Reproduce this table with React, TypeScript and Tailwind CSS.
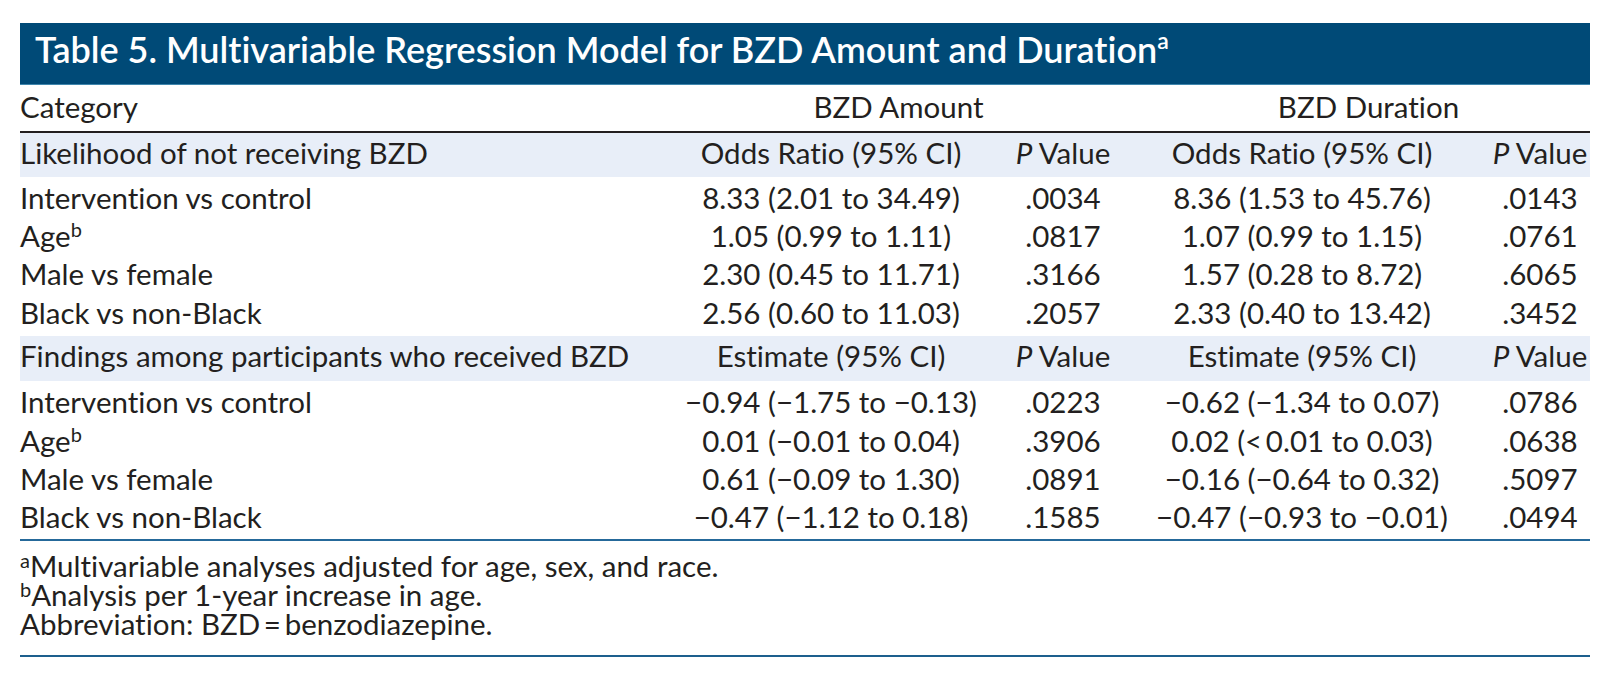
import React from "react";

const FONT = { fontFamily: "Lato, 'Open Sans', sans-serif" };

type Row = [React.ReactNode, string, string, string, string];

const SupB = () => <sup className="text-[20px] -top-[0.5em]">b</sup>;

const rows1: Row[] = [
  ["Intervention vs control", "8.33 (2.01 to 34.49)", ".0034", "8.36 (1.53 to 45.76)", ".0143"],
  [<>Age<SupB /></>, "1.05 (0.99 to 1.11)", ".0817", "1.07 (0.99 to 1.15)", ".0761"],
  ["Male vs female", "2.30 (0.45 to 11.71)", ".3166", "1.57 (0.28 to 8.72)", ".6065"],
  ["Black vs non-Black", "2.56 (0.60 to 11.03)", ".2057", "2.33 (0.40 to 13.42)", ".3452"],
];

const rows2: Row[] = [
  ["Intervention vs control", "\u22120.94 (\u22121.75 to \u22120.13)", ".0223", "\u22120.62 (\u22121.34 to 0.07)", ".0786"],
  [<>Age<SupB /></>, "0.01 (\u22120.01 to 0.04)", ".3906", "0.02 (<\u20090.01 to 0.03)", ".0638"],
  ["Male vs female", "0.61 (\u22120.09 to 1.30)", ".0891", "\u22120.16 (\u22120.64 to 0.32)", ".5097"],
  ["Black vs non-Black", "\u22120.47 (\u22121.12 to 0.18)", ".1585", "\u22120.47 (\u22120.93 to \u22120.01)", ".0494"],
];

const GRID = "grid grid-cols-[630px_362px_102px_376px_100px]";

function PV() {
  return (
    <span>
      <i>P</i> Value
    </span>
  );
}

function SubHead({ label, est, h }: { label: string; est: string; h: string }) {
  return (
    <div className={`${GRID} ${h} bg-[#e8eef8] pt-[1px] leading-[38px]`}>
      <div>{label}</div>
      <div className="text-center">{est}</div>
      <div className="text-center"><PV /></div>
      <div className="text-center">{est}</div>
      <div className="text-center"><PV /></div>
    </div>
  );
}

function Rows({ rows, pad }: { rows: Row[]; pad: string }) {
  return (
    <div className={pad}>
      {rows.map((r, i) => (
        <div key={i} className={`${GRID} leading-[38.4px]`}>
          <div>{r[0]}</div>
          <div className="text-center">{r[1]}</div>
          <div className="text-center">{r[2]}</div>
          <div className="text-center">{r[3]}</div>
          <div className="text-center">{r[4]}</div>
        </div>
      ))}
    </div>
  );
}

export default function App() {
  return (
    <div
      className="w-[1613px] h-[684px] bg-white pt-[23px] pl-[20px] [font-variant-ligatures:none]"
      style={FONT}
    >
      <div className="w-[1570px] text-[29.5px] text-[#231f20]">
        <div className="h-[62px] bg-[#004a77] border-b border-[#3f86ad] pl-[15px] pt-[3px]">
          <span className="text-white font-semibold text-[36px] leading-[46px]">
            Table 5. Multivariable Regression Model for BZD Amount and Duration
            <sup className="text-[23px] -top-[0.6em] font-semibold">a</sup>
          </span>
        </div>
        <div className="grid grid-cols-[630px_497px_443px] h-[48px] pt-[3px] leading-[38px] border-b-2 border-[#231f20]">
          <div>Category</div>
          <div className="text-center">BZD Amount</div>
          <div className="text-center">BZD Duration</div>
        </div>
        <SubHead label="Likelihood of not receiving BZD" est="Odds Ratio (95% CI)" h="h-[44px]" />
        <Rows rows={rows1} pad="pt-[1.5px] pb-[4px]" />
        <SubHead label="Findings among participants who received BZD" est="Estimate (95% CI)" h="h-[45px]" />
        <Rows rows={rows2} pad="pt-[2px] pb-[2.5px]" />
        <div className="h-[2px] bg-[#25699a]" />
        <div className="pt-[11px] pb-[16px] leading-[28.8px] text-[29.5px]">
          <div><sup className="text-[20px] -top-[0.45em]">a</sup>Multivariable analyses adjusted for age, sex, and race.</div>
          <div><sup className="text-[20px] -top-[0.45em]">b</sup>Analysis per 1-year increase in age.</div>
          <div>Abbreviation: BZD{"\u2009"}={"\u2009"}benzodiazepine.</div>
        </div>
        <div className="h-[2px] bg-[#1d5f8d]" />
      </div>
    </div>
  );
}
